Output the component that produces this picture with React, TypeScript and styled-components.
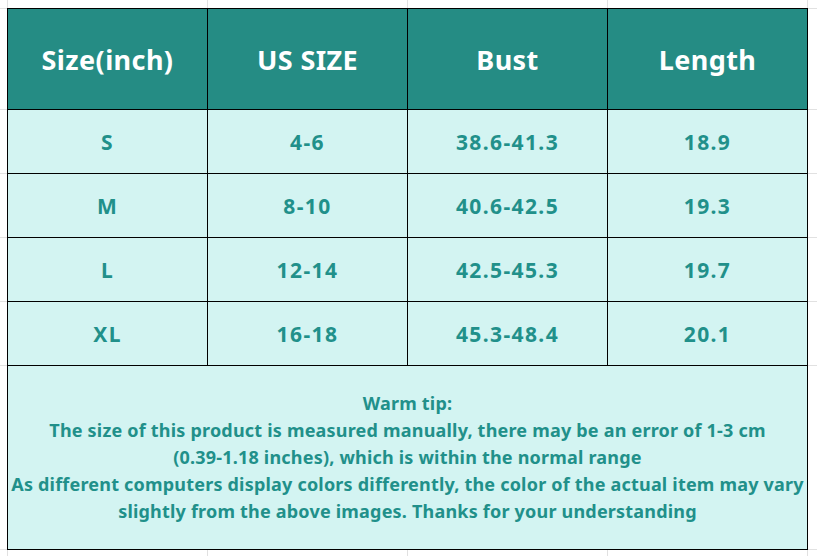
import React from "react";
import styled, { createGlobalStyle } from "styled-components";

const GlobalStyle = createGlobalStyle`
  html, body {
    margin: 0;
    padding: 0;
    background: #ffffff;
  }
  body {
    font-family: "Noto Sans", "Open Sans", sans-serif;
  }
`;

const GRID = "#e1e1e1";

const Sheet = styled.div`
  width: 817px;
  height: 556px;
  box-sizing: border-box;
  padding: 8px 0 0 7px;
  overflow: hidden;
  background-color: #ffffff;
  background-image:
    repeating-linear-gradient(to right, ${GRID} 0 1px, transparent 1px 200px),
    linear-gradient(${GRID}, ${GRID}),
    linear-gradient(${GRID}, ${GRID}),
    linear-gradient(${GRID}, ${GRID}),
    linear-gradient(${GRID}, ${GRID}),
    linear-gradient(${GRID}, ${GRID}),
    linear-gradient(${GRID}, ${GRID}),
    linear-gradient(${GRID}, ${GRID});
  background-repeat: no-repeat;
  background-size: 100% 100%, 100% 1px, 100% 1px, 100% 1px, 100% 1px, 100% 1px, 100% 1px, 100% 1px;
  background-position: 7px 0, 0 8px, 0 109px, 0 173px, 0 237px, 0 301px, 0 365px, 0 549px;
`;

const Table = styled.div`
  display: grid;
  grid-template-columns: repeat(4, 200px);
  grid-template-rows: 101px repeat(4, 64px) 184px;
  width: 801px;
  box-sizing: border-box;
  border-right: 1px solid #000;
  border-bottom: 1px solid #000;
`;

const Cell = styled.div<{ $head?: boolean }>`
  box-sizing: border-box;
  border-left: 1px solid #000;
  border-top: 1px solid #000;
  display: flex;
  align-items: center;
  justify-content: center;
  background: ${(p) => (p.$head ? "#258c84" : "#d3f4f2")};
  color: ${(p) => (p.$head ? "#ffffff" : "#21908a")};
  font-weight: 700;
  font-size: ${(p) => (p.$head ? "27px" : "21px")};
  letter-spacing: ${(p) => (p.$head ? "0.4px" : "1.4px")};
  padding-top: ${(p) => (p.$head ? "1px" : "0")};
`;

const Note = styled.div`
  grid-column: 1 / -1;
  box-sizing: border-box;
  border-left: 1px solid #000;
  border-top: 1px solid #000;
  background: #d3f4f2;
  color: #21908a;
  font-weight: 700;
  font-size: 18px;
  letter-spacing: 0.2px;
  line-height: 27px;
  display: flex;
  flex-direction: column;
  align-items: center;
  justify-content: center;
  text-align: center;
`;

const NoteLine = styled.div`
  white-space: nowrap;
`;

const headers = ["Size(inch)", "US SIZE", "Bust", "Length"];
const rows = [
  ["S", "4-6", "38.6-41.3", "18.9"],
  ["M", "8-10", "40.6-42.5", "19.3"],
  ["L", "12-14", "42.5-45.3", "19.7"],
  ["XL", "16-18", "45.3-48.4", "20.1"],
];
const noteLines = [
  "Warm tip:",
  "The size of this product is measured manually, there may be an error of 1-3 cm",
  "(0.39-1.18 inches), which is within the normal range",
  "As different computers display colors differently, the color of the actual item may vary",
  "slightly from the above images. Thanks for your understanding",
];

export default function App() {
  return (
    <>
      <GlobalStyle />
      <Sheet>
        <Table>
          {headers.map((h) => (
            <Cell key={h} $head>
              {h}
            </Cell>
          ))}
          {rows.map((r) =>
            r.map((c, i) => <Cell key={r[0] + i}>{c}</Cell>)
          )}
          <Note>
            {noteLines.map((l) => (
              <NoteLine key={l}>{l}</NoteLine>
            ))}
          </Note>
        </Table>
      </Sheet>
    </>
  );
}
